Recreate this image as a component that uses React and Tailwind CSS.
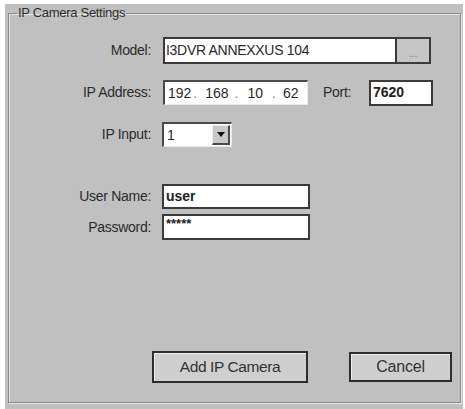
import React from 'react';

const font = { fontFamily: '"Liberation Sans", Arial, sans-serif' };

const Label = ({ children }) => (
    <div className="w-[142px] shrink-0 text-right text-[14px] tracking-[-0.3px] text-[#2b2b2b]">{children}</div>
);

export default function App() {
    return (
        <div className="w-[465px] h-[409px] bg-white flex overflow-hidden" style={font}>
            <div className="ml-[5px] mt-[4px] mr-[2px] flex-1 bg-[#c0c0c0] pl-[3px] pr-[2px]">
                <fieldset className="h-[399px] border border-[#8a8a8a] shadow-[inset_1px_1px_0_#e6e6e6,1px_1px_0_#e6e6e6]">
                    <legend className="ml-[8px] px-[1px] text-[13px] leading-[18px] tracking-[-0.3px] text-[#2e2e2e]">
                        IP Camera Settings
                    </legend>

                    <div className="pt-[15px] flex flex-col">
                        {/* Model */}
                        <div className="flex items-center h-[27px]">
                            <Label>Model:</Label>
                            <div className="ml-[12px] flex h-[27px] border-2 border-[#3a3a3a]">
                                <div className="w-[230px] bg-white flex items-center pl-[1px] text-[14px] tracking-[-0.3px] text-[#2a2a2a]">
                                    I3DVR ANNEXXUS 104
                                </div>
                                <div className="w-[34px] border-l-2 border-[#3a3a3a] bg-[#c6c6c6] flex items-end justify-center pb-[3px] text-[10px] leading-[10px] text-[#777]">
                                    ...
                                </div>
                            </div>
                        </div>

                        {/* IP Address */}
                        <div className="mt-[16px] flex items-center h-[25px]">
                            <Label>IP Address:</Label>
                            <div className="ml-[12px] w-[145px] h-[25px] bg-white border-t-2 border-l-2 border-[#4a4a4a] border-r border-b border-r-[#e8e8e8] border-b-[#e8e8e8] flex items-center pl-[3px] text-[14px] text-[#2a2a2a]">
                                <span>192</span>
                                <span className="ml-[2px] text-[#888]">.</span>
                                <span className="ml-[8px]">168</span>
                                <span className="ml-[6px] text-[#888]">.</span>
                                <span className="ml-[9px]">10</span>
                                <span className="ml-[9px] text-[#888]">.</span>
                                <span className="ml-[7px]">62</span>
                            </div>
                            <span className="ml-[15px] w-[46px] text-[14px] tracking-[-0.3px] text-[#2b2b2b]">Port:</span>
                            <div className="w-[64px] h-[26px] bg-white border-2 border-[#3a3a3a] flex items-center pl-[2px] text-[14px] font-bold text-[#222]">
                                7620
                            </div>
                        </div>

                        {/* IP Input */}
                        <div className="mt-[17px] flex items-center h-[25px]">
                            <Label>IP Input:</Label>
                            <div className="ml-[11px] w-[70px] h-[25px] bg-white border-t-2 border-l-2 border-[#4a4a4a] border-r border-b border-r-[#e8e8e8] border-b-[#e8e8e8] flex items-center">
                                <span className="pl-[3px] flex-1 text-[14px] text-[#2a2a2a]">1</span>
                                <div className="w-[18px] h-[20px] mr-[1px] bg-[#c8c8c8] border-r-2 border-b-2 border-[#4a4a4a] border-t border-l border-t-[#eee] border-l-[#eee] flex items-center justify-center">
                                    <svg width="8" height="5" viewBox="0 0 8 5">
                                        <path d="M0 0 H8 L4 5 Z" fill="#111" />
                                    </svg>
                                </div>
                            </div>
                        </div>

                        {/* User Name */}
                        <div className="mt-[37px] flex items-center h-[25px]">
                            <Label>User Name:</Label>
                            <div className="ml-[11px] w-[148px] h-[25px] bg-white border-2 border-[#3a3a3a] flex items-center pl-[2px] text-[14px] font-bold text-[#222]">
                                user
                            </div>
                        </div>

                        {/* Password */}
                        <div className="mt-[5px] flex items-center h-[26px]">
                            <Label>Password:</Label>
                            <div className="ml-[11px] w-[148px] h-[26px] bg-white border-2 border-[#3a3a3a] flex items-start pt-[1px] pl-[2px] text-[13px] leading-[13px] font-bold text-[#222]">
                                *****
                            </div>
                        </div>

                        {/* Buttons */}
                        <div className="mt-[111px] flex items-start">
                            <button className="ml-[143px] w-[156px] h-[32px] bg-[#cfcfcf] border-2 border-[#2e2e2e] shadow-[inset_1px_1px_0_#eee] text-[15.5px] tracking-[-0.4px] text-[#333]">
                                Add IP Camera
                            </button>
                            <button className="ml-[41px] mt-[1px] w-[103px] h-[30px] bg-[#cfcfcf] border-2 border-[#2e2e2e] shadow-[inset_1px_1px_0_#eee] text-[16px] tracking-[-0.2px] text-[#333]">
                                Cancel
                            </button>
                        </div>
                    </div>
                </fieldset>
            </div>
        </div>
    );
}
